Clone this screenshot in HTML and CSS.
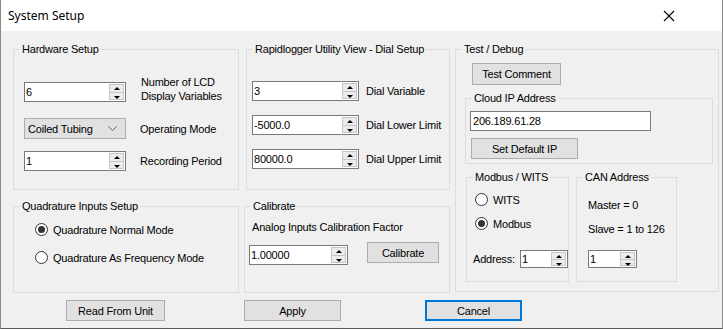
FILE: index.html
```html
<!DOCTYPE html>
<html lang="en">
<head>
    <meta charset="UTF-8">
    <title>System Setup</title>
    <link rel="stylesheet" href="styles.css">
</head>
<body>
    <div class="window">
        <div class="titlebar">
            <span class="title">System Setup</span>
            <svg class="close" width="12" height="12" viewBox="0 0 12 12">
                <path d="M1 1 L11 11 M11 1 L1 11" stroke="#000" stroke-width="1.1" fill="none"/>
            </svg>
        </div>

        <div class="main">
            <fieldset class="group hardware">
                <legend>Hardware Setup</legend>
                <div class="hw-body">
                    <div class="row first">
                        <div class="spin hw-spin">
                            <input class="spin-input" value="6">
                            <span class="spin-btns"><span class="up"></span><span class="down"></span></span>
                        </div>
                        <div class="label two-line">Number of LCD<br>Display Variables</div>
                    </div>
                    <div class="row combo-row">
                        <div class="combo">
                            <span>Coiled Tubing</span>
                            <svg width="9" height="5" viewBox="0 0 9 5"><path d="M0.5 0.5 L4.5 4.5 L8.5 0.5" stroke="#606060" fill="none"/></svg>
                        </div>
                        <div class="label">Operating Mode</div>
                    </div>
                    <div class="row last">
                        <div class="spin hw-spin">
                            <input class="spin-input" value="1">
                            <span class="spin-btns"><span class="up"></span><span class="down"></span></span>
                        </div>
                        <div class="label">Recording Period</div>
                    </div>
                </div>
            </fieldset>

            <fieldset class="group dial">
                <legend>Rapidlogger Utility View - Dial Setup</legend>
                <div class="dial-body">
                    <div class="row">
                        <div class="spin dial-spin">
                            <input class="spin-input" value="3">
                            <span class="spin-btns"><span class="up"></span><span class="down"></span></span>
                        </div>
                        <div class="label">Dial Variable</div>
                    </div>
                    <div class="row">
                        <div class="spin dial-spin">
                            <input class="spin-input" value="-5000.0">
                            <span class="spin-btns"><span class="up"></span><span class="down"></span></span>
                        </div>
                        <div class="label">Dial Lower Limit</div>
                    </div>
                    <div class="row">
                        <div class="spin dial-spin">
                            <input class="spin-input" value="80000.0">
                            <span class="spin-btns"><span class="up"></span><span class="down"></span></span>
                        </div>
                        <div class="label">Dial Upper Limit</div>
                    </div>
                </div>
            </fieldset>

            <fieldset class="group debug">
                <legend>Test / Debug</legend>
                <div class="debug-body">
                    <button class="btn test-btn">Test Comment</button>
                    <fieldset class="group cloud">
                        <legend>Cloud IP Address</legend>
                        <div class="cloud-body">
                            <input class="textbox ip" value="206.189.61.28">
                            <button class="btn ip-btn">Set Default IP</button>
                        </div>
                    </fieldset>
                    <div class="sub-groups">
                        <fieldset class="group modbus">
                            <legend>Modbus / WITS</legend>
                            <div class="modbus-body">
                                <label class="radio"><span class="dot"></span>WITS</label>
                                <label class="radio second"><span class="dot checked"></span>Modbus</label>
                                <div class="addr-row">
                                    <span class="addr-label">Address:</span>
                                    <div class="spin small-spin">
                                        <input class="spin-input" value="1">
                                        <span class="spin-btns"><span class="up"></span><span class="down"></span></span>
                                    </div>
                                </div>
                            </div>
                        </fieldset>
                        <fieldset class="group can">
                            <legend>CAN Address</legend>
                            <div class="can-body">
                                <div class="can-line">Master = 0</div>
                                <div class="can-line slave">Slave = 1 to 126</div>
                                <div class="spin small-spin can-spin">
                                    <input class="spin-input" value="1">
                                    <span class="spin-btns"><span class="up"></span><span class="down"></span></span>
                                </div>
                            </div>
                        </fieldset>
                    </div>
                </div>
            </fieldset>

            <fieldset class="group quad">
                <legend>Quadrature Inputs Setup</legend>
                <div class="quad-body">
                    <label class="radio"><span class="dot checked"></span>Quadrature Normal Mode</label>
                    <label class="radio second"><span class="dot"></span>Quadrature As Frequency Mode</label>
                </div>
            </fieldset>

            <fieldset class="group calibrate">
                <legend>Calibrate</legend>
                <div class="cal-body">
                    <div class="cal-label">Analog Inputs Calibration Factor</div>
                    <div class="cal-row">
                        <div class="spin cal-spin">
                            <input class="spin-input" value="1.00000">
                            <span class="spin-btns"><span class="up"></span><span class="down"></span></span>
                        </div>
                        <button class="btn cal-btn">Calibrate</button>
                    </div>
                </div>
            </fieldset>
        </div>

        <div class="footer">
            <button class="btn read-btn">Read From Unit</button>
            <button class="btn apply-btn">Apply</button>
            <button class="btn cancel-btn">Cancel</button>
        </div>
    </div>
</body>
</html>
```

FILE: styles.css
```css
body {
    margin: 0;
    padding: 0;
    font-family: "Liberation Sans", Arial, sans-serif;
    font-size: 11px;
    letter-spacing: -0.2px;
    color: #000;
    background: #f0f0f0;
}
.window {
    width: 723px;
    height: 329px;
    box-sizing: border-box;
    background: #f0f0f0;
    border: 1px solid #8a8a8a;
    border-top: none;
    border-bottom-color: #5a5a5a;
    overflow: hidden;
}
.titlebar {
    height: 31px;
    background: #fff;
    display: flex;
    align-items: center;
    justify-content: space-between;
    padding: 0 47px 0 7px;
}
.title {
    font-family: "Noto Sans", "Open Sans", sans-serif;
    font-size: 12px;
    letter-spacing: 0;
}
.close {
    display: block;
}
.main {
    display: grid;
    grid-template-columns: 226px 206px 264px;
    grid-template-rows: 147px 93px;
    column-gap: 5px;
    row-gap: 10px;
    padding: 12px 0 0 12px;
}
.group {
    margin: 0;
    padding: 0;
    border: 1px solid #dcdcdc;
    min-width: 0;
    box-sizing: border-box;
}
.group legend {
    margin-left: 6px;
    padding: 0 2px;
    font-size: 11px;
    line-height: 13px;
}
.debug {
    grid-column: 3;
    grid-row: 1 / 3;
    height: 249px;
}
.dial {
    margin-left: 2px;
}
.quad {
    grid-column: 1;
    grid-row: 2;
}
.calibrate {
    grid-column: 2;
    grid-row: 2;
}

/* inputs */
.spin {
    display: flex;
    height: 20px;
    box-sizing: border-box;
    border: 1px solid #7a7a7a;
    background: #fff;
}
.spin-input, .textbox {
    border: none;
    outline: none;
    font: inherit;
    letter-spacing: inherit;
    padding: 0 1px;
    margin: 0;
    min-width: 0;
    flex: 1;
    background: transparent;
}
.spin-btns {
    width: 15px;
    margin: 1px 1px 1px 0;
    display: flex;
    flex-direction: column;
}
.spin-btns span {
    flex: 1;
    background: #ececec;
    border: 1px solid #c6c6c6;
    position: relative;
}
.spin-btns .up {
    border-bottom: none;
}
.spin-btns span::after {
    content: "";
    position: absolute;
    left: 4px;
    top: 2px;
    border-left: 3px solid transparent;
    border-right: 3px solid transparent;
}
.spin-btns .up::after {
    border-bottom: 3px solid #000;
}
.spin-btns .down::after {
    border-top: 3px solid #000;
    top: 3px;
}
.textbox {
    border: 1px solid #7a7a7a;
    background: #fff;
    height: 20px;
    box-sizing: border-box;
    padding: 0 2px;
}
.btn {
    font: inherit;
    letter-spacing: inherit;
    background: #e1e1e1;
    border: 1px solid #adadad;
    padding: 0;
    color: #000;
    box-sizing: border-box;
    display: block;
}
.combo {
    width: 102px;
    height: 21px;
    box-sizing: border-box;
    background: #e1e1e1;
    border: 1px solid #adadad;
    display: flex;
    align-items: center;
    justify-content: space-between;
    padding: 0 8px 0 3px;
}
.radio {
    display: flex;
    align-items: center;
    height: 17px;
}
.dot {
    width: 13px;
    height: 13px;
    box-sizing: border-box;
    border: 1px solid #333;
    border-radius: 50%;
    background: #fff;
    margin-right: 5px;
    display: flex;
    align-items: center;
    justify-content: center;
}
.dot.checked::after {
    content: "";
    width: 7px;
    height: 7px;
    border-radius: 50%;
    background: #333;
}

/* hardware */
.hw-body {
    padding: 26px 0 0 10px;
}
.row {
    display: flex;
    align-items: center;
    gap: 14px;
}
.row.first {
    align-items: flex-start;
}
.two-line {
    line-height: 14px;
    margin-top: -7px;
    margin-left: 1px;
}
.hw-spin {
    width: 102px;
}
.combo-row {
    margin-top: 15px;
}
.row.last {
    margin-top: 12px;
}

/* dial */
.dial-body {
    padding: 25px 0 0 5px;
}
.dial-body .row {
    gap: 7px;
    margin-bottom: 14px;
}
.dial-spin {
    width: 107px;
}

/* quadrature */
.quad-body {
    padding: 8px 0 0 21px;
}
.quad-body .second {
    margin-top: 11px;
}

/* calibrate */
.cal-body {
    padding: 7px 0 0 4px;
}
.cal-label {
    line-height: 14px;
    padding-left: 3px;
}
.cal-row {
    display: flex;
    align-items: flex-start;
    gap: 19px;
    margin-top: 11px;
}
.cal-spin {
    width: 99px;
}
.cal-btn {
    width: 72px;
    height: 21px;
    margin-top: -3px;
}

/* test / debug */
.debug-body {
    padding: 7px 0 0 9px;
}
.test-btn {
    width: 89px;
    height: 22px;
    margin-left: 7px;
}
.cloud {
    width: 248px;
    margin-top: 7px;
}
.cloud-body {
    padding: 6px 0 4px 4px;
}
.ip {
    width: 181px;
    display: block;
}
.ip-btn {
    width: 107px;
    height: 21px;
    margin: 7px 0 0 1px;
}
.sub-groups {
    display: flex;
    gap: 7px;
    margin: 7px 0 0 1px;
}
.modbus {
    width: 103px;
    height: 111px;
}
.can {
    width: 101px;
    height: 111px;
}
.modbus-body {
    padding: 7px 0 0 8px;
}
.modbus-body .second {
    margin-top: 7px;
}
.addr-row {
    display: flex;
    align-items: center;
    margin: 18px 0 0 -2px;
}
.addr-label {
    width: 48px;
}
.small-spin {
    height: 18px;
    width: 48px;
}
.can-body {
    padding: 14px 0 0 11px;
}
.can-line {
    line-height: 14px;
}
.can-line.slave {
    margin-top: 10px;
}
.can-spin {
    margin-top: 14px;
    width: 49px;
}

/* footer */
.footer {
    display: flex;
    padding: 7px 0 0 65px;
}
.read-btn {
    width: 99px;
    height: 21px;
}
.apply-btn {
    width: 97px;
    height: 21px;
    margin-left: 79px;
}
.cancel-btn {
    width: 97px;
    height: 21px;
    margin-left: 84px;
    border: 2px solid #0078d7;
}
```
